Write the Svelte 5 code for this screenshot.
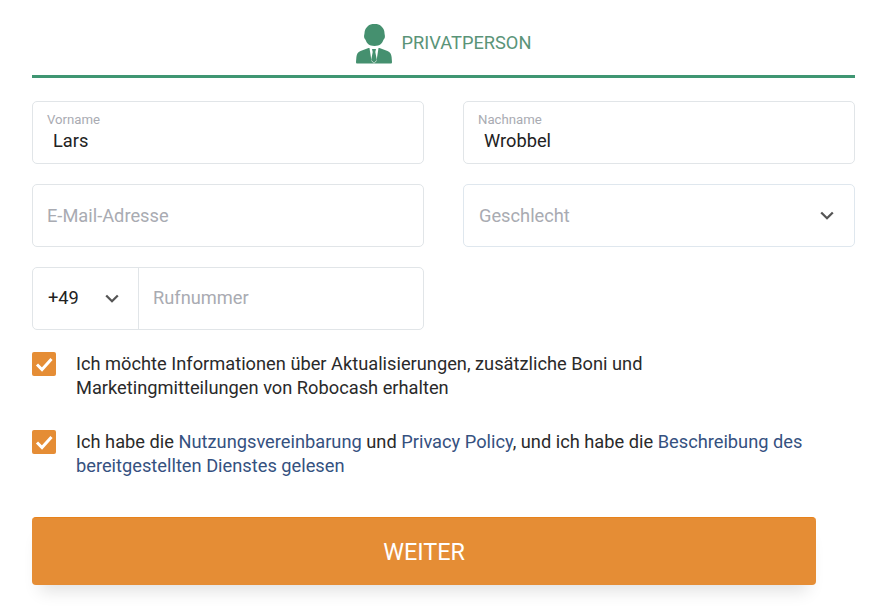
<script>
  // Registration step: person type header, contact fields, consents, submit.
  const consents = [
    [
      { t: 'Ich möchte Informationen über Aktualisierungen, zusätzliche Boni und Marketingmitteilungen von Robocash erhalten' }
    ],
    [
      { t: 'Ich habe die ' },
      { t: 'Nutzungsvereinbarung', link: true },
      { t: ' und ' },
      { t: 'Privacy Policy', link: true },
      { t: ', und ich habe die ' },
      { t: 'Beschreibung des', link: true },
      { t: ' ' },
      { t: 'bereitgestellten Dienstes gelesen', link: true }
    ]
  ];
</script>

{#snippet chevron()}
  <svg class="chev" viewBox="0 0 14 9" aria-hidden="true"><path d="M1.200 1.500L7 7.200l5.800-5.700" fill="none" stroke="#555" stroke-width="2.300"/></svg>
{/snippet}

<main class="form">
  <header class="tab">
    <svg class="person" viewBox="0 0 36 40" aria-hidden="true">
      <path d="M18.500 0c-3 0-5 .6-6.500 2C10 3.700 8.500 6 8.500 9c0 1.500-.6 2-.4 4 .2 1.700 1 2 1.500 3 1 3 3.400 6 8.900 6s7.900-3 8.900-6c.5-1 1.300-1.300 1.500-3 .2-2-.4-2.500-.4-4 0-3-1.500-5.300-3.500-7-1.500-1.400-3.500-2-6-2z" fill="#45906f"/>
      <path d="M12.500 24L4.500 27C1.800 28 .8 30 .4 33L0 38c0 1 .5 1.600 1.300 1.600h33.400c.8 0 1.300-.6 1.300-1.600l-.4-5c-.4-3-1.400-5-4.100-6l-8-3z" fill="#45906f"/>
      <path d="M13.500 24h9l-2 13-2.500 2.600L15.500 37z" fill="#fff"/>
      <path d="M16 25h4l-.7 3 1.500 8-2.800 3-2.800-3 1.500-8z" fill="#45906f"/>
    </svg>
    <span>PRIVATPERSON</span>
  </header>

  <div class="grid">
    <label class="field filled">
      <small>Vorname</small>
      <input value="Lars" />
    </label>
    <label class="field filled">
      <small>Nachname</small>
      <input value="Wrobbel" />
    </label>
    <div class="field plain"><input placeholder="E-Mail-Adresse" /></div>
    <div class="field plain select">
      <span>Geschlecht</span>
      {@render chevron()}
    </div>
    <div class="field phone">
      <div class="code">
        <span>+49</span>
        {@render chevron()}
      </div>
      <input placeholder="Rufnummer" />
    </div>
  </div>

  <div class="consents">
    {#each consents as parts}
      <div class="consent">
        <span class="box">
          <svg viewBox="0 0 24 24" aria-hidden="true"><path d="M5 12.500l5 5L19.500 7" fill="none" stroke="#fff" stroke-width="3"/></svg>
        </span>
        <p>{#each parts as p}{#if p.link}<a href="#top">{p.t}</a>{:else}<span>{p.t}</span>{/if}{/each}</p>
      </div>
    {/each}
  </div>

  <button class="submit">WEITER</button>
</main>

<style>
  :global(body) { background: #fff; }
  .form { box-sizing: border-box; width: 875px; height: 608px; padding: 0 20px 0 32px; overflow: hidden;
    font-family: Roboto, "Liberation Sans", sans-serif; color: #222; }
  .tab { height: 75px; border-bottom: 3px solid #3f9672; display: flex; align-items: center; justify-content: center; gap: 10px;
    color: #5a9478; font-size: 18.25px; }
  .person { width: 36px; height: 40px; margin-top: 13px; }
  .tab span { margin-top: 10px; }
  .grid { display: grid; grid-template-columns: 392px 392px; column-gap: 39px; row-gap: 20px; margin-top: 23px; }
  .field { box-sizing: border-box; height: 63px; border: 1px solid #e1e5e8; border-radius: 5px; display: block; background: #fff; }
  input { border: 0; outline: 0; padding: 0; font: inherit; color: #222; background: transparent; min-width: 0; }
  input::placeholder { color: #a9abb2; opacity: 1; }
  .filled { padding: 10px 14px 0; }
  .filled small { display: block; font-size: 13.2px; line-height: 15px; color: #a9abb2; }
  .filled input { display: block; width: 100%; margin-top: 1px; padding-left: 6px; font-size: 18.25px; line-height: 26px; height: 26px; }
  .plain { display: flex; align-items: center; padding: 0 14px 1px; font-size: 18.25px; }
  .plain input { width: 100%; }
  .select { justify-content: space-between; padding: 0 20px 1px 15px; color: #a9abb2; border-color: #dfe7ee; }
  .chev { width: 14px; height: 9px; }
  .phone { display: flex; padding-bottom: 2px; }
  .code { box-sizing: border-box; width: 106px; flex: none; display: flex; align-items: center; justify-content: space-between;
    padding: 0 19px 0 15px; border-right: 1px solid #e1e5e8; font-size: 18.25px; margin-bottom: -2px; }
  .code span { margin-bottom: 2px; }
  .phone input { flex: 1; padding-left: 14px; font-size: 18.25px; }
  .consents { margin-top: 21.500px; display: flex; flex-direction: column; gap: 29px; }
  .consent { display: flex; gap: 20px; width: 790px; }
  .consent p { margin: 0; font-size: 18.25px; line-height: 24.5px; color: #2a2a2a; }
  .consent a { color: #35517f; text-decoration: none; }
  .box { flex: none; width: 24px; height: 24px; border-radius: 2px; background: #e58d35; display: block; margin-top: .5px; }
  .box svg { display: block; width: 24px; height: 24px; }
  .submit { display: block; width: 784px; height: 68px; margin-top: 38.500px; border: 0; border-top: 1px solid #e8821a; border-radius: 4px; background: #e58d35;
    color: #fff; font: 400 23.4px Roboto, "Liberation Sans", sans-serif; box-shadow: 0 14px 16px -8px rgba(0,0,0,.12); }
</style>
